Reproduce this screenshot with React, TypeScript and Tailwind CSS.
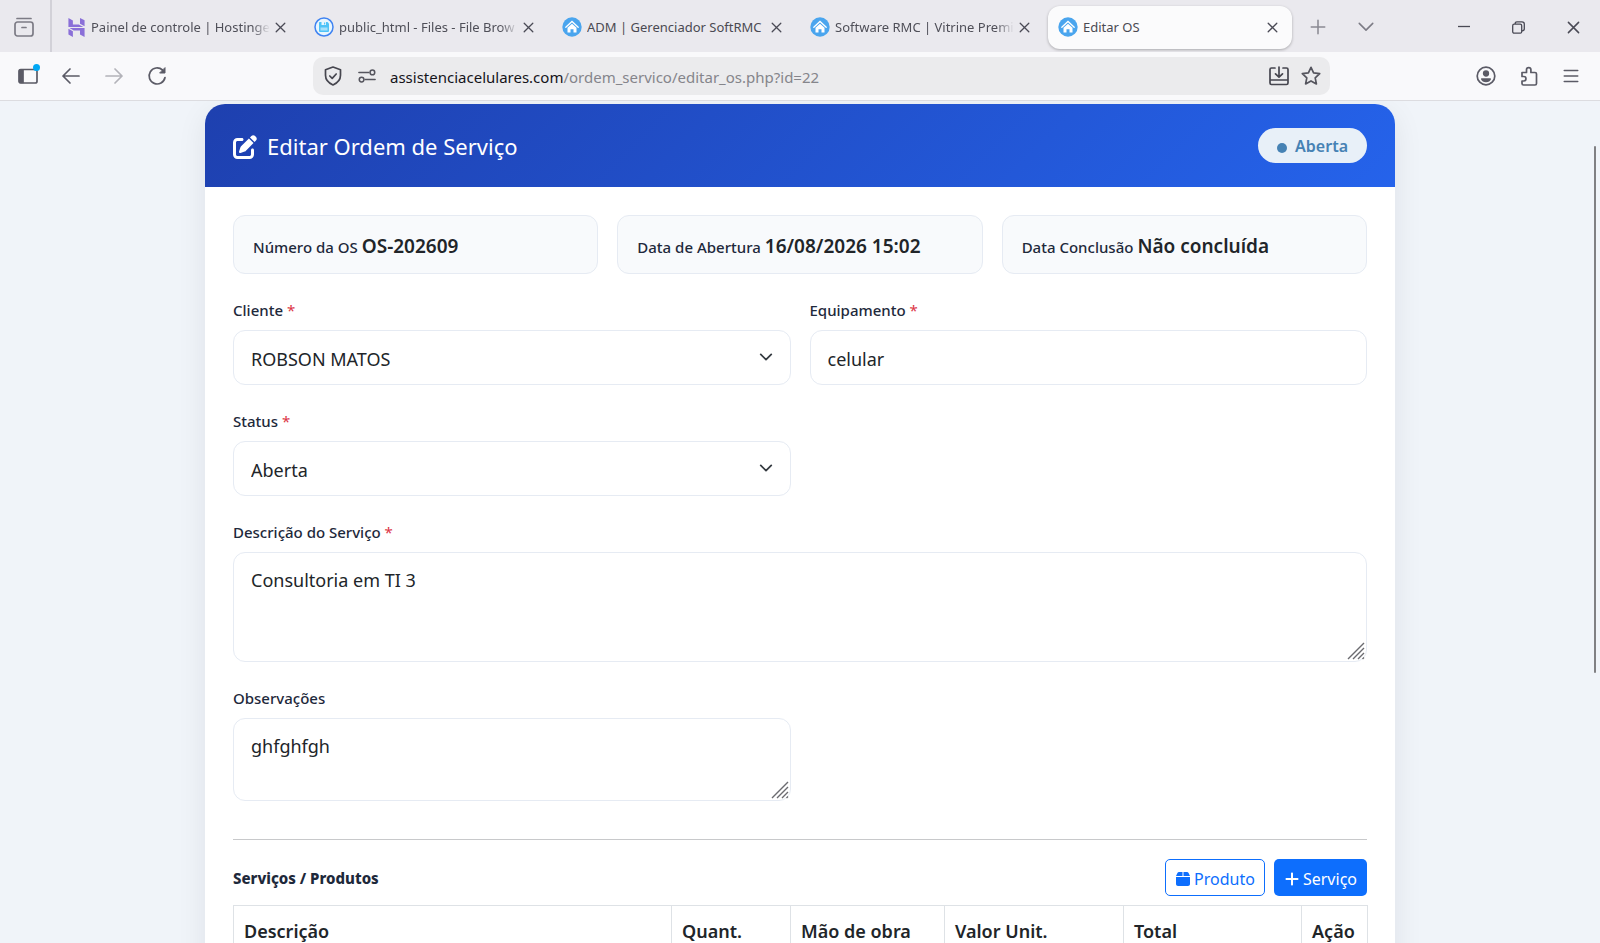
import React from "react";
import { FaBox, FaPenToSquare, FaPlus } from "react-icons/fa6";

type IconProps = { children: React.ReactNode; className?: string; size?: number };

function Stroke({ children, className = "text-[#5b5b66]", size = 20 }: IconProps) {
  return (
    <svg
      width={size}
      height={size}
      viewBox="0 0 20 20"
      fill="none"
      stroke="currentColor"
      strokeWidth="1.7"
      strokeLinecap="round"
      strokeLinejoin="round"
      className={className}
      aria-hidden="true"
    >
      {children}
    </svg>
  );
}

function HostingerIcon() {
  return (
    <svg width="19" height="19" viewBox="0 0 24 24" fill="#8a6fd8" aria-hidden="true">
      <path d="M16.415 0v7.160l5.785 3.384V2.949zM1.800 0v11.237h18.815L14.890 8.090l-7.457-.003V3.024zM16.415 20.894v-5.019l-7.514-.005c.007.033-5.820-3.197-5.820-3.197l19.119.091V24zM1.800 13.551v7.343l5.633 2.949v-6.988z" />
    </svg>
  );
}

function FilesIcon() {
  return (
    <svg width="20" height="20" viewBox="0 0 20 20" aria-hidden="true">
      <circle cx="10" cy="10" r="9" fill="#e9f6fe" stroke="#3f83f2" strokeWidth="1.500" />
      <path d="M5.500 5h8l1.500 1.500V14q0 1-1 1H6q-1 0-1-1V5.500q0-.500.500-.500z" fill="#4fc3f7" />
      <path d="M7.500 5h4.500v3H7.500z" fill="#e9f6fe" />
      <path d="M10 5.500h1.200v2H10z" fill="#4fc3f7" />
      <path d="M6.500 10.500h7v3h-7z" fill="#a8e0fa" />
    </svg>
  );
}

function HouseIcon() {
  return (
    <svg width="20" height="20" viewBox="0 0 20 20" aria-hidden="true">
      <circle cx="10" cy="10" r="9.700" fill="#4aa5ee" />
      <path d="M3.800 10.300L10 4.500l6.200 5.800" fill="none" stroke="#fff" strokeWidth="1.300" strokeLinecap="round" />
      <path d="M5.500 10.800L10 6.800l4.500 4v4.700h-3v-3.200h-3v3.200h-3z" fill="#fff" />
    </svg>
  );
}

const tabs = [
  { title: "Painel de controle | Hostinge", icon: <HostingerIcon />, active: false, fade: true },
  { title: "public_html - Files - File Brow", icon: <FilesIcon />, active: false, fade: true },
  { title: "ADM | Gerenciador SoftRMC", icon: <HouseIcon />, active: false, fade: false },
  { title: "Software RMC | Vitrine Premi", icon: <HouseIcon />, active: false, fade: true },
  { title: "Editar OS", icon: <HouseIcon />, active: true, fade: false },
];

function CloseMark({ size = 12 }: { size?: number }) {
  return (
    <svg width={size} height={size} viewBox="0 0 12 12" stroke="#4a4a55" strokeWidth="1.400" strokeLinecap="round" aria-hidden="true">
      <path d="M1.300 1.300l9.400 9.400M10.700 1.300L1.300 10.700" />
    </svg>
  );
}

function TabStrip() {
  return (
    <div className="flex h-[52px] shrink-0 items-center bg-[#eae9ee]">
      <div className="flex h-full w-[52px] shrink-0 items-center justify-center border-r-2 border-[#d2d1d8] pt-0.5">
        <button aria-label="Abas recentes" className="pr-0.5">
          <Stroke className="text-[#7c7b85]">
            <rect x="1" y="5" width="18" height="14" rx="2.500" />
            <path d="M3 1.500h14M8 10.500h4" />
          </Stroke>
        </button>
      </div>
      <div className="ml-1 flex max-w-[1236px] min-w-0 flex-1 gap-1 pt-0.5">
        {tabs.map((tab) => (
          <div
            key={tab.title}
            className={
              tab.active
                ? "flex h-[43px] min-w-0 flex-1 items-center rounded-xl bg-[#fbfbfc] px-2.5 shadow-[0_1px_3px_rgba(0,0,0,0.28)]"
                : "flex h-[43px] min-w-0 flex-1 items-center px-2.5"
            }
          >
            <span className="flex w-5 shrink-0 justify-center">{tab.icon}</span>
            <a
              href="#"
              className={
                tab.fade
                  ? "ml-[5px] min-w-0 flex-1 overflow-hidden mask-r-from-90% pt-0.5 text-[13px] whitespace-nowrap text-[#4f4f58]"
                  : "ml-[5px] min-w-0 flex-1 overflow-hidden pt-0.5 text-[13px] whitespace-nowrap text-[#4a4a52]"
              }
            >
              {tab.title}
            </a>
            <button aria-label={`Fechar ${tab.title}`} className="flex w-5 shrink-0 justify-center">
              <CloseMark size={11} />
            </button>
          </div>
        ))}
      </div>
      <div className="flex flex-none items-center gap-7 pt-0.5 pl-4">
        <button aria-label="Nova aba" className="flex w-5 justify-center">
          <Stroke className="text-[#8a8992]" size={18}>
            <path d="M2.500 10h15M10 2.500v15" />
          </Stroke>
        </button>
        <button aria-label="Listar abas" className="flex w-5 justify-center">
          <Stroke className="text-[#7c7b85]" size={18}>
            <path d="M2.500 6l7.500 7.500L17.500 6" />
          </Stroke>
        </button>
      </div>
      <div className="ml-auto flex items-center gap-[42px] pt-0.5 pr-5">
        <button aria-label="Minimizar">
          <svg width="12" height="13" viewBox="0 0 12 13" stroke="#4a4a55" strokeWidth="1.300" aria-hidden="true">
            <path d="M0 5.500h12" />
          </svg>
        </button>
        <button aria-label="Restaurar">
          <svg width="13" height="13" viewBox="0 0 13 13" fill="none" stroke="#4a4a55" strokeWidth="1.300" aria-hidden="true">
            <rect x="0.700" y="3.200" width="9" height="9" rx="1.500" />
            <path d="M3.200 3V2.500Q3.200.800 5 .800H10Q12.300.800 12.300 3V8Q12.300 9.800 10 9.800" />
          </svg>
        </button>
        <button aria-label="Fechar janela">
          <CloseMark size={13} />
        </button>
      </div>
    </div>
  );
}

function Toolbar() {
  return (
    <div className="flex h-[49px] shrink-0 items-center border-b border-[#dcdce0] bg-[#f9f9fb]">
      <div className="flex w-[313px] shrink-0 items-center gap-[23px] pl-[18px]">
        <button aria-label="Barra lateral" className="relative">
          <Stroke>
            <rect x="1" y="3.500" width="18" height="13.500" rx="1.800" />
            <path d="M1.800 4h3.200v12.500H1.800z" fill="currentColor" />
          </Stroke>
          <span className="absolute -top-0.5 -right-0.5 size-[7px] rounded-full bg-[#00a8f5]" />
        </button>
        <button aria-label="Voltar">
          <Stroke>
            <path d="M18 10H2M9 3L2 10l7 7" />
          </Stroke>
        </button>
        <button aria-label="Avançar" disabled>
          <Stroke className="text-[#b3b3b9]">
            <path d="M2 10h16M11 3l7 7-7 7" />
          </Stroke>
        </button>
        <button aria-label="Recarregar">
          <Stroke>
            <path d="M18 11.500A8 8 0 1 1 15.500 4L17 5.500" />
            <path d="M18 2v5h-5z" fill="currentColor" strokeWidth="1" />
          </Stroke>
        </button>
      </div>
      <div className="flex h-[38px] max-w-[1017px] min-w-0 flex-1 items-center rounded-[10px] bg-[#ebebed] pr-[9px] pl-2.5">
        <Stroke className="shrink-0 text-[#46464f]">
          <path d="M10 1l7.500 2.800v5.500c0 4.500-3 7.700-7.500 9.700-4.500-2-7.500-5.200-7.500-9.700V3.800z" />
          <path d="M6.800 10l2.400 2.300 4-4.300" />
        </Stroke>
        <Stroke className="ml-[15px] shrink-0 text-[#55555e]" size={18}>
          <path d="M1 6h11M8 14h11" />
          <circle cx="16" cy="6" r="2.600" />
          <circle cx="4" cy="14" r="2.600" />
        </Stroke>
        <a href="#" className="ml-3.5 min-w-0 flex-1 truncate pt-0.5 text-[15px] text-[#85858b]">
          <span className="text-[#15141a]">assistenciacelulares.com</span>/ordem_servico/editar_os.php?id=22
        </a>
        <button aria-label="Instalar">
          <Stroke className="text-[#46464f]">
            <path d="M6 2H2.500Q1 2 1 3.500V17q0 1.500 1.500 1.500h15Q19 18.500 19 17V3.500Q19 2 17.500 2H14M1 14h18M10 1v10M6.500 7.800L10 11.200l3.500-3.400" />
          </Stroke>
        </button>
        <button aria-label="Favoritar" className="ml-3">
          <Stroke className="text-[#55555e]">
            <path d="M10 1.300l2.600 5.600 6.100.700-4.500 4.200 1.200 6.100-5.400-3-5.400 3 1.200-6.100L1.300 7.600l6.100-.700z" />
          </Stroke>
        </button>
      </div>
      <div className="ml-auto flex items-center gap-[23px] pr-5">
        <button aria-label="Conta">
          <Stroke>
            <circle cx="10" cy="10" r="8.800" />
            <circle cx="10" cy="7.500" r="2.300" fill="currentColor" />
            <path d="M5.800 13h8.400q-1 2.500-4.200 2.500T5.800 13z" fill="currentColor" />
          </Stroke>
        </button>
        <button aria-label="Extensões">
          <Stroke>
            <path d="M3 6.500h4.500V3.800a2.200 2.200 0 0 1 4.400 0V6.500H16q1.500 0 1.500 1.500v9.500q0 1.500-1.500 1.500H4.500Q3 19 3 17.500V15h1.700a2 2 0 0 0 0-4.500H3z" />
          </Stroke>
        </button>
        <button aria-label="Menu">
          <Stroke size={18}>
            <path d="M2.500 4h15M2.500 10h15M2.500 16h15" />
          </Stroke>
        </button>
      </div>
    </div>
  );
}

function Label({ htmlFor, children, required }: { htmlFor: string; children: React.ReactNode; required?: boolean }) {
  return (
    <label htmlFor={htmlFor} className="block text-[15px] leading-[22px] font-medium text-[#1e293b]">
      {children}
      {required && <span className="font-normal text-[#dc3545]"> *</span>}
    </label>
  );
}

function SelectField({ id, label, options }: { id: string; label: string; options: string[] }) {
  return (
    <div>
      <Label htmlFor={id} required>
        {label}
      </Label>
      <div className="relative mt-[9px]">
        <select id={id} className="h-[55px] w-full appearance-none rounded-xl border border-[#e6ebf3] bg-white px-[17px] pt-0.5 text-lg text-[#212529]">
          {options.map((option) => (
            <option key={option}>{option}</option>
          ))}
        </select>
        <svg width="14" height="14" viewBox="0 0 16 16" fill="none" stroke="#343a40" strokeWidth="2" strokeLinecap="round" strokeLinejoin="round" className="pointer-events-none absolute top-5 right-[18px]" aria-hidden="true">
          <path d="M2 5l6 6 6-6" />
        </svg>
      </div>
    </div>
  );
}

function AreaField({ id, label, value, required, className }: { id: string; label: string; value: string; required?: boolean; className: string }) {
  return (
    <div>
      <Label htmlFor={id} required={required}>
        {label}
      </Label>
      <div className="relative mt-[9px]">
        <textarea id={id} defaultValue={value} className={`${className} block w-full resize-none rounded-xl border border-[#e6ebf3] bg-white px-[17px] py-[13px] text-lg leading-[29px] text-[#212529]`} />
        <svg width="18" height="18" viewBox="0 0 18 18" stroke="#6b6b70" strokeWidth="1.400" className="pointer-events-none absolute right-0.5 bottom-0.5" aria-hidden="true">
          <path d="M1 17L17 1M6 17L17 6M11 17l6-6M15.500 17l1.500-1.500" />
        </svg>
      </div>
    </div>
  );
}

const info = [
  ["Número da OS", "OS-202609"],
  ["Data de Abertura", "16/08/2026 15:02"],
  ["Data Conclusão", "Não concluída"],
];

const columns = [
  { name: "Descrição", width: "w-[438px]" },
  { name: "Quant.", width: "w-[119px]" },
  { name: "Mão de obra", width: "w-[154px]" },
  { name: "Valor Unit.", width: "w-[179px]" },
  { name: "Total", width: "w-[178px]" },
  { name: "Ação", width: "w-[66px]" },
];

function OrderForm() {
  return (
    <form className="p-7">
      <div className="grid grid-cols-3 gap-[19px]">
        {info.map(([name, value]) => (
          <div key={name} className="flex h-[59px] items-baseline gap-1 rounded-xl border border-[#e6ebf3] bg-[#f8fafc] px-[19px] pt-4 whitespace-nowrap">
            <span className="text-[15px] font-medium text-[#1e293b]">{name}</span>
            <strong className="text-[19px] leading-[29px] font-semibold text-[#212529]">{value}</strong>
          </div>
        ))}
      </div>
      <div className="mt-[25px] grid grid-cols-2 gap-x-[19px] gap-y-[25px]">
        <SelectField id="cliente" label="Cliente" options={["ROBSON MATOS"]} />
        <div>
          <Label htmlFor="equipamento" required>
            Equipamento
          </Label>
          <input id="equipamento" defaultValue="celular" className="mt-[9px] h-[55px] w-full rounded-xl border border-[#e6ebf3] bg-white px-[17px] pt-0.5 text-lg text-[#212529]" />
        </div>
        <SelectField id="status" label="Status" options={["Aberta"]} />
        <div className="col-span-2">
          <AreaField id="descricao" label="Descrição do Serviço" value="Consultoria em TI 3" required className="h-[110px]" />
        </div>
        <AreaField id="observacoes" label="Observações" value="ghfghfgh" className="h-[83px]" />
      </div>
      <hr className="mt-[38px] border-[#c8c9cb]" />
      <div className="mt-[19px] flex items-center justify-between">
        <h2 className="pt-0.5 text-[15px] font-extrabold text-[#1e293b]">Serviços / Produtos</h2>
        <div className="flex gap-[9px]">
          <button type="button" className="flex h-[37px] items-center gap-[3px] rounded-[5px] border border-[#0d6efd] px-[9px] pt-0.5 text-base text-[#0d6efd]">
            <FaBox className="size-4" />
            Produto
          </button>
          <button type="button" className="flex h-[37px] items-center gap-[3px] rounded-[5px] bg-[#0d6efd] px-2.5 pt-0.5 text-base text-white">
            <FaPlus className="size-4" />
            Serviço
          </button>
        </div>
      </div>
      <table className="mt-[9px] w-full table-fixed border-collapse text-left">
        <thead>
          <tr>
            {columns.map((column) => (
              <th key={column.name} className={`${column.width} border border-[#dee2e6] px-2.5 py-3 text-lg leading-[27px] font-semibold whitespace-nowrap text-[#212529]`}>
                {column.name}
              </th>
            ))}
          </tr>
        </thead>
      </table>
    </form>
  );
}

export default function App() {
  return (
    <div className="flex h-screen flex-col overflow-hidden bg-white font-['Segoe_UI','Noto_Sans',sans-serif]">
      <TabStrip />
      <Toolbar />
      <main className="relative min-h-0 flex-1 overflow-hidden bg-[#f0f4f9] pt-[3px]">
        <section className="mx-auto w-full max-w-[1190px] rounded-[20px] bg-white shadow-[0_8px_30px_rgba(15,23,42,0.08)]">
          <header className="flex h-[83px] items-center justify-between rounded-t-[20px] bg-linear-135 from-[#1e40af] to-[#2563eb] px-7 text-white">
            <h1 className="flex items-center gap-2.5 pt-0.5 text-[22px]">
              <FaPenToSquare className="size-6" />
              Editar Ordem de Serviço
            </h1>
            <span className="flex h-[35px] items-center gap-2 rounded-full bg-[#e8f0f8] px-[19px] text-base font-semibold text-[#4682b4]">
              <span className="mt-1 size-2.5 rounded-full bg-[#4682b4]" />
              Aberta
            </span>
          </header>
          <OrderForm />
        </section>
        <div className="absolute top-[45px] right-1 h-[527px] w-0.5 rounded-full bg-[#808083]" />
      </main>
    </div>
  );
}
